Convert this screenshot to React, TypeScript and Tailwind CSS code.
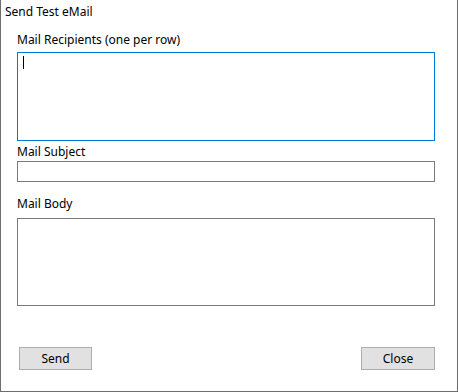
import React from "react";

export default function App() {
  return (
    <div className="w-[458px] h-[392px] bg-white border-l border-r border-b border-[#6d6d6d] font-['Noto_Sans',sans-serif] text-[12px] leading-[16px] text-black flex flex-col">
      {/* Title */}
      <div className="pt-[4px] pl-[4px]">Send Test eMail</div>

      <div className="flex flex-col pl-[16px] pr-[22px]">
        {/* Recipients */}
        <label className="mt-[12px]">Mail Recipients (one per row)</label>
        <div className="mt-[4px] h-[89px] border border-[#0078d7] relative">
          <span className="absolute left-[5px] top-[3px] w-px h-[13px] bg-black" />
        </div>

        {/* Subject */}
        <label className="mt-[3px]">Mail Subject</label>
        <div className="mt-[1px] h-[21px] border border-[#7a7a7a]" />

        {/* Body */}
        <label className="mt-[14px]">Mail Body</label>
        <div className="mt-[6px] h-[88px] border border-[#7a7a7a]" />

        {/* Buttons */}
        <div className="mt-[41px] flex justify-between pl-[2px]">
          <button className="w-[73px] h-[23px] bg-[#e1e1e1] border border-[#adadad] text-[12px]">Send</button>
          <button className="w-[74px] h-[23px] bg-[#e1e1e1] border border-[#adadad] text-[12px]">Close</button>
        </div>
      </div>
    </div>
  );
}
